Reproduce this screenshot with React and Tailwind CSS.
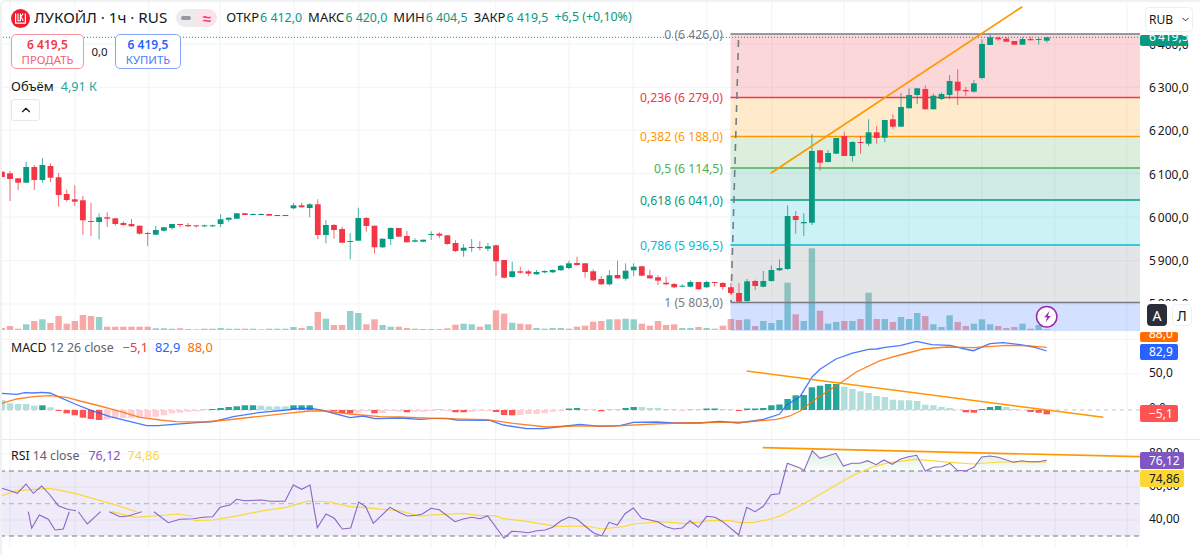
import React from 'react';
import { ChevronUp, ChevronDown } from 'lucide-react';

const UP = '#089981';
const DOWN = '#f23645';

// bar position on the time scale
const barX = (i) => 1.9 + 8.1 * i;

// [direction, body top, body bottom, high, low, volume height]
const candles = [
  ['d', 171.7, 177, 171, 177.7, 2], ['d', 173.3, 179, 171, 201, 4], ['d', 178.3, 182.7, 178.3, 190, 1.3], ['u', 167, 182.7, 162, 182.7, 5.7],
  ['d', 167, 180, 165, 190, 9], ['u', 165, 180, 158, 182.7, 10.7], ['d', 166, 177.7, 163.3, 182, 7], ['d', 177.3, 195, 173, 206.7, 14],
  ['d', 194, 200, 189.7, 201.7, 6.3], ['d', 199.3, 201.7, 185.3, 206, 9], ['d', 200.3, 220.3, 196, 234.7, 15], ['d', 221, 222, 202.7, 236, 14],
  ['u', 217.3, 222, 213.3, 239.3, 13], ['d', 217.3, 218.7, 212.3, 227, 3.3], ['d', 218.3, 224, 218.3, 225.7, 3.3], ['d', 223, 225, 221.3, 225.7, 3.3],
  ['d', 224, 226.3, 219, 226.7, 3.3], ['d', 225.7, 233.7, 225.7, 234.7, 3.3], ['d', 233, 234, 231.7, 246, 3.3], ['u', 230, 234.7, 225.7, 235, 1.7],
  ['u', 227.3, 230.7, 227.3, 231.7, 1.7], ['u', 224, 228, 224, 229.7, 1.3], ['d', 224, 225, 224, 227, 1.7], ['d', 225, 226.3, 223, 226.7, 1],
  ['d', 225.3, 226.3, 225.3, 227.7, 0.7], ['u', 225.3, 226.3, 224.7, 227.3, 1.3], ['u', 225.3, 226.3, 224.7, 227, 1.3], ['u', 219.3, 224, 214.3, 227, 2],
  ['u', 217.7, 219.7, 217.7, 221.7, 1.3], ['u', 213.3, 218.7, 213, 218.7, 1.3], ['d', 213.3, 215, 213, 215, 1.3], ['u', 214, 215, 213.3, 215, 1.3],
  ['u', 214, 215, 213.3, 215, 0.7], ['d', 214, 215.7, 213.7, 215.7, 1.3], ['u', 215, 215.7, 215, 215.7, 1.3], ['u', 215, 215.7, 215, 215.7, 1.3],
  ['u', 205.3, 208.3, 203, 209.3, 3], ['d', 205.3, 207.3, 203, 207.7, 2], ['u', 204.3, 208, 203.3, 217.3, 4], ['d', 204.3, 235, 199.3, 239.3, 18],
  ['u', 225, 235, 220, 243.3, 11.3], ['d', 225, 230, 224, 238.7, 5], ['d', 229, 242.7, 226.7, 243.3, 5], ['u', 241, 242, 233, 259.3, 19],
  ['u', 218, 240.7, 207.7, 241, 17], ['d', 218, 226, 217, 231.7, 5.7], ['d', 225.7, 247.3, 225.7, 253.3, 10.7], ['u', 238.7, 247.3, 238.7, 248, 5],
  ['u', 228, 239, 227.3, 245, 3.3], ['d', 228, 236.7, 228, 236.7, 3.3], ['d', 236, 242.3, 231, 242.3, 2], ['u', 240.3, 241.7, 238.3, 242.3, 1.3],
  ['u', 239.7, 241.7, 239.7, 242.3, 1], ['u', 234, 235, 231.3, 240, 1], ['d', 233.7, 235.7, 232.3, 238.3, 1], ['d', 235.3, 244, 235.3, 244.7, 1.7],
  ['d', 243, 251, 240.3, 252, 5.3], ['u', 247.7, 250.7, 244, 256.7, 6.3], ['u', 247, 248, 239, 252, 5.7], ['d', 247, 248, 241.3, 250.3, 3.3],
  ['u', 246.3, 248.7, 243, 251.3, 5.7], ['d', 245.3, 261.3, 244.7, 276, 19.7], ['d', 260, 277.7, 260, 278.3, 16.3], ['u', 271.3, 277, 261.7, 277.7, 7.3],
  ['d', 271.3, 272.7, 266.7, 273.7, 6.3], ['d', 271.3, 273.7, 269.7, 276, 5.7], ['u', 272, 274.3, 270, 274.7, 2], ['u', 271, 272.3, 270.3, 273.3, 1.3],
  ['u', 270, 272.3, 269.3, 273, 2], ['u', 265.7, 270.3, 265, 270.7, 2], ['u', 263.3, 268, 260.7, 269.3, 1.3], ['d', 263, 265, 256.7, 265.7, 3.3],
  ['d', 263.3, 272, 263.3, 277.7, 4.3], ['d', 271.3, 280.3, 269.3, 281, 8.3], ['d', 279, 284.3, 276, 285, 9], ['u', 275.3, 284.3, 270, 285.7, 10.7],
  ['d', 275, 278.3, 260.7, 279, 10.7], ['u', 270.7, 278.7, 263.3, 280.7, 11.3], ['u', 266.7, 270.3, 263.3, 276, 10.7], ['d', 266.3, 275.7, 265.7, 276.3, 6.3],
  ['d', 275.3, 278.3, 270, 279, 4.3], ['d', 277.3, 280.7, 275.3, 285, 9], ['d', 282.7, 284.3, 276.7, 285.3, 5], ['d', 284, 287.3, 283, 288, 5.7],
  ['u', 285.7, 286.7, 284.3, 287.3, 2], ['u', 282, 286.7, 280.3, 287.3, 2], ['d', 282, 289.3, 282, 289.7, 3], ['u', 282, 287.3, 280.7, 287.7, 2],
  ['d', 282, 282.7, 282, 286.7, 1.3], ['d', 283, 287, 282, 290, 4.3], ['d', 287.3, 293, 283, 295, 11], ['d', 293, 301.7, 283, 302, 10],
  ['u', 281.3, 301, 279, 302, 10.7], ['d', 281, 286, 279.7, 290, 4], ['u', 281, 286.7, 271, 287.3, 9], ['u', 270, 281, 265.7, 281.7, 7],
  ['u', 268, 270.3, 259.3, 271, 10], ['u', 216, 269, 205.3, 270, 47.3], ['d', 216, 220, 211, 233.7, 15.7], ['u', 222, 223.3, 213.3, 236, 9],
  ['u', 151, 222.7, 134, 225, 81.7], ['d', 150.3, 162.7, 150, 170.7, 19.3], ['u', 153, 162, 150, 162.3, 6.3], ['u', 138, 153.7, 138, 154, 8],
  ['d', 136, 156, 131.7, 156, 9], ['u', 142, 156, 141.3, 161.7, 9], ['d', 142, 143, 136, 153.7, 11], ['u', 132.3, 143.7, 119.3, 146, 37.3],
  ['d', 132.3, 138, 126, 143.7, 11], ['u', 120, 137.7, 119.7, 142.3, 11], ['d', 119.3, 126.7, 114.3, 128.7, 8], ['u', 107, 126.7, 93, 126.7, 13],
  ['u', 95, 108.3, 88.3, 108.3, 11], ['u', 88.3, 95, 88.3, 104, 17], ['d', 89, 109.3, 85.3, 109.3, 14], ['u', 95.7, 109.3, 93.7, 109.3, 5.7],
  ['u', 94, 99, 92.3, 100, 3], ['u', 81, 95, 75, 99.3, 14.7], ['d', 81.7, 90.7, 69.3, 105, 8], ['d', 90, 91.3, 87, 95.7, 4],
  ['u', 83.3, 91.7, 80, 92.7, 6.3], ['u', 44, 78, 39.3, 79.3, 10.7], ['u', 37.3, 45, 35, 45, 5.7], ['d', 37.7, 39.3, 36.7, 40.7, 4],
  ['d', 38.7, 41.7, 37, 41.7, 2], ['d', 41, 44.7, 41, 44.7, 3], ['u', 39, 44.7, 37.3, 44.7, 6.3], ['d', 39, 40.3, 36.7, 40.3, 1.3],
  ['u', 39, 39.7, 37.3, 44.7, 5], ['u', 37.3, 40.7, 37.3, 42.7, 0.7],
];

const histogram = [
  10, 6.7, 6, 6, 4.3, 4.7, 2.7, -1, -3.3, -5.3, -7.7, -9, -10, -9.3, -7.7, -8, -8, -8, -7.3, -6.7, -5.3, -3.3, -2.7, -1.7, -1.3,
  1, 1, 2, 3, 3.7, 4.7, 4.7, 4.3, 3.7, 3.7, 3.7, 4.7, 4.7, 4.7, 0.7, -1, -1.3, -3, -3.3, -2.7, -1.3, -3.3, -3, -1, -1.7,
  -2.3, -1.7, -1.7, -1, 1, -1, -2.3, -2.3, -1.7, -1, -1, -2, -5, -5.3, -5, -4, -4, -3.3, -1.7, -1,
  1.5, 2, 1, 0.7, -1.3, 1, 1, 2, 3, 3, 2, 2, 1, 0.7, -1, 1, 0.7, 1.5, 1.5, 1, 0.7, -1, 1.5, 1.5, 2, 4.7, 5.5, 11, 14.7,
  15, 22.7, 24.3, 26, 26, 23.3, 21, 18.7, 17, 14, 13, 10.3, 9.7, 9.7, 9, 5.3, 4.7, 3, 2, 0.3, -2.3, -2.7, 1, 3, 4, 3, 1, -0.5, -2, -2.7, -4.3,
];

const strongBars = new Set([
  5, 7, 8, 9, 10, 11, 12, 26, 27, 28, 29, 30, 31, 36, 37, 38, 41, 42, 43, 46, 50, 56, 57, 61, 62, 63, 70, 71, 74, 77, 78, 87, 88, 91,
  92, 93, 94, 95, 96, 97, 98, 99, 100, 101, 102, 103, 119, 120, 121, 122, 123, 127, 128, 129,
]);

const histColor = (v, i) => {
  if (v >= 0) return strongBars.has(i) ? '#26a69a' : '#b2dfdb';
  return strongBars.has(i) ? '#ff5252' : '#ffcdd2';
};

const gridX = [10, 75, 148.7, 220, 294, 358.7, 431, 495.7, 569, 633, 706.7, 771.7, 844, 908.7, 982, 1055, 1127];

const fibZones = [
  { top: 34, bottom: 97.5, color: '#f23645' },
  { top: 97.5, bottom: 136.5, color: '#ff9800' },
  { top: 136.5, bottom: 168, color: '#4caf50' },
  { top: 168, bottom: 200, color: '#089981' },
  { top: 200, bottom: 245, color: '#00bcd4' },
  { top: 245, bottom: 302.5, color: '#787b86' },
  { top: 302.5, bottom: 331, color: '#2962ff' },
];

const fibLevels = [
  { y: 34, label: '0 (6 426,0)', color: '#787b86' },
  { y: 97.5, label: '0,236 (6 279,0)', color: '#f23645' },
  { y: 136.5, label: '0,382 (6 188,0)', color: '#ff9800' },
  { y: 168, label: '0,5 (6 114,5)', color: '#4caf50' },
  { y: 200, label: '0,618 (6 041,0)', color: '#089981' },
  { y: 245, label: '0,786 (5 936,5)', color: '#00bcd4' },
  { y: 302.5, label: '1 (5 803,0)', color: '#787b86' },
];

const macdLine = '1.7,393.3 16.7,394.3 25,392.7 33.3,393 41.7,392.3 50,393 58.3,396.7 75,404 91.7,410.7 110,416.7 146.7,425.7 158.3,425.7 173.3,424.3 196.7,422.7 213.3,421.7 233.3,416.7 258.3,412.7 286.7,410 295,408.7 311.7,408.3 325,411 350,417.7 363.3,416 375,418.7 400,418 420,419.3 433.3,418.3 446.7,418.3 456.7,420 490,420.3 503.3,425 526.7,428.7 543.3,428.7 566.7,426 580,424.3 600,426.3 620,425.7 633.3,422.3 656.7,422 673.3,423 700,423 720,421.3 738.3,423 763.3,419.3 779.3,414.3 786.7,405 800,396.7 812.3,376.7 820,369.3 836,359 851.7,353.3 868.3,349.3 876.7,349 885,347.3 900,345.7 916.7,341.3 931.7,344.7 950,345.3 965,349 973.3,350.7 990,343.7 1003.3,342.7 1020,344.7 1033.3,347 1046.7,351';
const signalLine = '1.7,403.3 16.7,399 33.3,396.7 50,395.7 66.7,397.3 80,401 100,406 120,411.3 140,417.3 160,420 176.7,421.7 203.3,422 226.7,420 260,416.3 286.7,413.3 310,411 325,411 350,414 380,416.7 400,417 433.3,418.3 486.7,419.7 513.3,423.3 546.7,427 573.3,426 613.3,426 646.7,424.3 680,423 720,422.3 746.7,422 776.7,419.3 790,416 800,411 816.7,398.3 840,383.3 856.7,371.7 880,360.7 900,355 923.3,349 946.7,347 973.3,347.7 1006.7,345.3 1026.7,345.7 1046.7,347.3';

const rsiHead = [
  '1.7,488.3 13.3,491.7 17.3,493.3 26,484 33.3,493.3 41.7,486 50,495 58.3,505.7 66.7,509 76,510.7',
  '28.3,511.7 31.7,528.3 39.3,515 48.3,519.3 55,530 63.3,529 69.3,511.7',
  '78.3,511.7 87.3,524 100.7,511.7',
  '109.3,511.7 120,516.7 128.3,516 141.7,511.7',
];
const rsiLong = '154,511.7 168.3,522.7 180,519.3 193.3,518.7 203.3,517.3 212.7,516.7 220,507.3 230,505 236.7,499.3 245,500.7 261.7,500 270,501.3 285,501.3 293.3,485 301.7,489.3 310,485 317.3,527.7 326,514 334.3,518.3 342.3,529 350.7,528 358.7,502 365.7,506.7 373.3,523.3 390,507.3 400,512.7 407.3,516 416.7,515.3 422.3,514 431,508.3 439.3,509.7 455,521.7 463.3,519 471.7,517.3 480,518.7 487.7,516 504,538.3 511.7,531.3 520,531.7 528.3,532.7 536.7,530.7 545,530 552.7,527.3 560.7,521 569,517 576.7,519 585,526 593.3,532.7 601.7,536 609,522.3 617.3,525 625,513.7 633.3,508 641.7,518.3 650,520 657.7,521.7 666,526.7 674,529 682.3,528 690,520.7 698.3,527.3 706.7,516.3 715,517.3 722.7,521.7 738.7,535 746.7,507.3 755,511.7 763.3,506.3 771,494.7 779.3,493.7 787.3,463.3 800,468 804,470.7 812.3,450.7 820,458.3 836,453.3 843.3,466 851.7,463.3 860,463.3 867.7,460.7 876,464.7 884,460 892.3,464.3 900,459.3 908.3,456.7 916.7,455.3 925.3,471 933.3,467.3 941.7,466.7 950,463.3 957.3,470.3 965.7,471 974,467.3 981.7,457 990,456 998.3,457.3 1013.3,462.3 1021.7,460.7 1030,461.7 1038.3,461.7 1046.7,460.3';
const rsiFill = '787.3,463.3 800,468 804,470.7 812.3,450.7 820,458.3 836,453.3 843.3,466 851.7,463.3 860,463.3 867.7,460.7 876,464.7 884,460 892.3,464.3 900,459.3 908.3,456.7 916.7,455.3 925.3,471 933.3,467.3 941.7,466.7 950,463.3 957.3,470.3 965.7,471 974,467.3 981.7,457 990,456 998.3,457.3 1013.3,462.3 1021.7,460.7 1030,461.7 1038.3,461.7 1046.7,460.3 1046.7,471 782,471';
const rsiMa = [
  '1.7,495.7 16.7,490.7 50,488.3 75,493.3 110,503.3 136.7,511.7',
  '111.7,511.7 135,517.3 166.7,515 176.7,514 192.7,516',
  '193.3,520.7 213.3,520 233.3,516.7 263.3,510.7 285,507.7 308.3,501 330,502 350,506.7 373.3,508.3 400,511 421.7,516.3 430,515 463.3,513.3 480,515.7 495,515.7 503.3,518.7 526.7,521.3 556.7,526.3 586.7,526 601.7,529 623.3,526.7 633.3,524 660,521.7 686.7,523.7 710,520.7 730,520.7 740,522.7 753.3,522.3 766.7,520 780,516 800,505.7 813.3,498.3 833.3,486.7 853.3,475 873.3,466.7 890,462.3 916.7,459.3 950,462.3 973.3,464 1000,462 1046.7,462',
];

// axis numbers use a thin space as thousands separator
const priceLabels = ['6\u2009400,0', '6\u2009300,0', '6\u2009200,0', '6\u2009100,0', '6\u2009000,0', '5\u2009900,0', '5\u2009800,0'];

const GridV = ({ top, bottom }) =>
  gridX.map((x) => <line key={x} x1={x} x2={x} y1={top} y2={bottom} stroke="#f2f3f5" />);

const GridH = ({ ys }) =>
  ys.map((y) => <line key={y} x1={0} x2={1140} y1={y} y2={y} stroke="#f2f3f5" />);

const LukoilLogo = () => (
  <svg width="19" height="19" viewBox="0 0 19 19" className="shrink-0">
    <circle cx="9.5" cy="9.5" r="9.5" fill="#ed1c2e" />
    <path d="M4.6 4.5v9.7h9.8V4.5" fill="none" stroke="#fff" strokeWidth="1.2" />
    <path d="M7 4.5v7.2h2.4V4.5M9.4 8.2l2.8-3.7M9.8 7.8l2.6 3.9" fill="none" stroke="#fff" strokeWidth="1.1" />
  </svg>
);

const MainPane = () => (
  <svg width="1140" height="332" viewBox="0 0 1140 332" className="block">
    <GridV top={0} bottom={332} />
    <GridH ys={[44, 87.3, 130, 173.3, 217, 260.7, 304]} />
    {candles.map((c, i) => (
      <rect key={i} x={barX(i) - 3.2} y={330 - c[5]} width="6.4" height={c[5]} fill={c[0] === 'u' ? '#26a69a' : '#ef5350'} fillOpacity="0.5" />
    ))}
    {fibZones.map((z) => (
      <rect key={z.top} x="730.5" y={z.top} width="409.5" height={z.bottom - z.top} fill={z.color} fillOpacity="0.2" />
    ))}
    {fibLevels.map((l) => (
      <g key={l.y}>
        <line x1="730.5" x2="1140" y1={l.y} y2={l.y} stroke={l.color} strokeWidth="1.5" />
        <text x="723" y={l.y + 4.5} textAnchor="end" fontSize="12.2" fill={l.color}>{l.label}</text>
      </g>
    ))}
    <line x1="738.5" y1="40" x2="731" y2="302" stroke="#787b86" strokeWidth="1.6" strokeDasharray="7 6" />
    {candles.map((c, i) => {
      const x = barX(i);
      const color = c[0] === 'u' ? UP : DOWN;
      return (
        <g key={i}>
          <line x1={x} x2={x} y1={c[3]} y2={c[4]} stroke={color} strokeOpacity="0.75" />
          <rect x={x - 2.9} y={c[1]} width="5.8" height={Math.max(c[2] - c[1], 1)} fill={color} />
        </g>
      );
    })}
    <line x1="0" x2="1140" y1="37.3" y2="37.3" stroke={UP} strokeDasharray="1 2" />
    <line x1="770.7" y1="173.3" x2="1022.3" y2="6.7" stroke="#ff9800" strokeWidth="1.7" />
    <circle cx="1046.7" cy="316.7" r="10.2" fill="#fff" stroke="#9c27b0" strokeWidth="1.5" />
    <path d="M1049.5 311l-5.3 6.3h3l-1.7 5 5.3-6.4h-3z" fill="#9c27b0" />
  </svg>
);

const MacdPane = () => (
  <svg width="1140" height="107" viewBox="0 332 1140 107" className="block">
    <GridV top={332} bottom={439} />
    <GridH ys={[339.3, 374]} />
    <line x1="0" x2="1140" y1="410" y2="410" stroke="#c3c5cc" strokeDasharray="4 4" />
    {histogram.map((v, i) => (
      <rect key={i} x={barX(i) - 3.2} y={v >= 0 ? 410 - v : 410} width="6.4" height={Math.abs(v)} fill={histColor(v, i)} />
    ))}
    <polyline points={macdLine} fill="none" stroke="#2962ff" strokeOpacity="0.85" strokeWidth="1.3" />
    <polyline points={signalLine} fill="none" stroke="#ff6d00" strokeOpacity="0.85" strokeWidth="1.3" />
    <line x1="746.7" y1="371" x2="1103.3" y2="417.3" stroke="#ff9800" strokeWidth="1.6" />
  </svg>
);

const RsiPane = () => (
  <svg width="1140" height="115" viewBox="0 440 1140 115" className="block">
    <defs>
      <linearGradient id="rsiOver" x1="0" x2="0" y1="450" y2="471" gradientUnits="userSpaceOnUse">
        <stop offset="0" stopColor="#4caf50" stopOpacity="0.22" />
        <stop offset="1" stopColor="#4caf50" stopOpacity="0.02" />
      </linearGradient>
    </defs>
    <GridV top={440} bottom={548} />
    <GridH ys={[454, 487, 520]} />
    <rect x="0" y="471" width="1140" height="65" fill="#7e57c2" fillOpacity="0.12" />
    <line x1="0" x2="1140" y1="471" y2="471" stroke="#787b86" strokeDasharray="5 4" />
    <line x1="0" x2="1140" y1="503.7" y2="503.7" stroke="#787b86" strokeOpacity="0.5" strokeDasharray="5 4" />
    <line x1="0" x2="1140" y1="536" y2="536" stroke="#787b86" strokeDasharray="5 4" />
    <polygon points={rsiFill} fill="url(#rsiOver)" />
    {rsiMa.map((p) => (
      <polyline key={p} points={p} fill="none" stroke="#fdd835" strokeWidth="1.2" />
    ))}
    {rsiHead.map((p) => (
      <polyline key={p} points={p} fill="none" stroke="#7e57c2" strokeOpacity="0.9" strokeWidth="1.1" />
    ))}
    <polyline points={rsiLong} fill="none" stroke="#7e57c2" strokeOpacity="0.9" strokeWidth="1.1" />
    <line x1="762.7" y1="447.7" x2="1140" y2="456.7" stroke="#ff9800" strokeWidth="1.7" />
  </svg>
);

const AxisTag = ({ className, children }) => (
  <div className={`absolute left-0 flex overflow-hidden rounded-[2px] pl-[9px] text-[12px] ${className}`}>
    {children}
  </div>
);

export default function App() {
  return (
    <div className="relative flex h-[555px] w-[1200px] flex-col overflow-hidden bg-white font-['Noto_Sans','Liberation_Sans',sans-serif] text-[#131722]">
      <div className="flex h-[332px]">
        <div className="relative w-[1140px]">
          <MainPane />
          <div className="absolute left-0 top-0 flex flex-col items-start pl-[11px] pt-[8px]">
            <div className="flex h-[20px] items-center">
              <LukoilLogo />
              <span className="ml-[4px] text-[15.2px] leading-none whitespace-nowrap">ЛУКОЙЛ · 1ч · RUS</span>
              <div className="ml-[9px] flex h-[18px] w-[41px] overflow-hidden rounded-full">
                <div className="flex w-[20px] items-center justify-center bg-[#ececee]">
                  <span className="h-[4px] w-[10px] rounded-full bg-[#9598a1]" />
                </div>
                <div className="flex flex-1 items-center justify-center bg-[#fce3e8] text-[15px] font-semibold leading-[18px] text-[#f23d7a]">≈</div>
              </div>
              <div className="ml-[9px] flex gap-[6px] text-[13px] whitespace-nowrap">
                <span>ОТКР<span className="ml-[1px] text-[12.4px] text-[#089981]">6 412,0</span></span>
                <span>МАКС<span className="ml-[1px] text-[12.4px] text-[#089981]">6 420,0</span></span>
                <span>МИН<span className="ml-[1px] text-[12.4px] text-[#089981]">6 404,5</span></span>
                <span>ЗАКР<span className="ml-[1px] text-[12.4px] text-[#089981]">6 419,5</span></span>
                <span className="text-[12.4px] text-[#089981]">+6,5 (+0,10%)</span>
              </div>
            </div>
            <div className="mt-[6px] flex items-center">
              <div className="flex h-[35px] w-[73px] flex-col items-center justify-center rounded-[5px] border border-[#f7949d] bg-white leading-[15px] text-[#f23645]">
                <span className="text-[12px] font-semibold">6 419,5</span>
                <span className="text-[11.4px] text-[#f5606c]">ПРОДАТЬ</span>
              </div>
              <span className="w-[31px] text-center text-[11.5px]">0,0</span>
              <div className="flex h-[35px] w-[66px] flex-col items-center justify-center rounded-[5px] border border-[#84a5fb] bg-white leading-[15px] text-[#2962ff]">
                <span className="text-[12px] font-semibold">6 419,5</span>
                <span className="text-[11.4px] text-[#4b7bfb]">КУПИТЬ</span>
              </div>
            </div>
            <div className="mt-[9px] flex h-[18px] items-center gap-[7px] text-[13px]">
              <span>Объём</span>
              <span className="text-[12.6px] text-[#26a69a]">4,91 К</span>
            </div>
            <div className="mt-[3px] flex h-[22px] w-[29px] items-center justify-center rounded-[3px] border border-[#e6e7eb] bg-white">
              <ChevronUp size={14} strokeWidth={2} />
            </div>
          </div>
        </div>
        <div className="relative w-[60px] text-[12px]">
          <div className="flex flex-col pl-[9px] pt-[23px]">
            {priceLabels.map((p) => (
              <div key={p} className="flex h-[43.3px] items-center whitespace-nowrap">{p}</div>
            ))}
          </div>
          <div className="absolute left-[5px] top-[7px] flex h-[25px] w-[48px] items-center justify-between rounded-[4px] border border-[#eeeff2] bg-white pl-[3px] pr-[1px] text-[12px]">
            RUB
            <ChevronDown size={11} strokeWidth={2} />
          </div>
          <AxisTag className="top-[35px] h-[11px] w-[48px] items-start bg-[#089981] text-white">
            <span className="mt-[-5px] leading-[14px] whitespace-nowrap">6{'\u2009'}419,5</span>
          </AxisTag>
          <div className="absolute left-0 top-[301px] flex h-[31px] w-[60px] gap-[5px] bg-white pl-[7px] pt-[3px]">
            <div className="flex h-[22px] w-[20px] items-center justify-center rounded-[4px] bg-[#2a2e39] text-[14px] text-white">A</div>
            <div className="flex h-[22px] w-[20px] items-center justify-center rounded-[4px] border border-[#eeeff2] text-[14px]">Л</div>
          </div>
        </div>
      </div>

      <div className="flex h-[108px] border-b border-[#e9eaed]">
        <div className="relative w-[1140px]">
          <MacdPane />
          <div className="absolute left-[11px] top-[6px] flex items-baseline gap-[7px] text-[12.8px] whitespace-nowrap">
            <span className="text-[12.3px]">MACD <span className="text-[#5d606b]">12 26 close</span></span>
            <span className="ml-[2px] text-[#f23645]">−5,1</span>
            <span className="text-[#2962ff]">82,9</span>
            <span className="text-[#ff6d00]">88,0</span>
          </div>
        </div>
        <div className="relative w-[60px] text-[12px]">
          <div className="pl-[9px] pt-[33px] leading-[16px]">50,0</div>
          <div className="mt-[19px] pl-[9px] leading-[16px]">0,0</div>
          <AxisTag className="top-0 h-[10px] w-[38px] items-start bg-[#ff6d00] text-white">
            <span className="mt-[-5px] leading-[14px]">88,0</span>
          </AxisTag>
          <AxisTag className="top-[12px] h-[16px] w-[38px] items-center bg-[#2962ff] text-white">82,9</AxisTag>
          <AxisTag className="top-[73px] h-[17px] w-[38px] items-center bg-[#ff5252] text-white">−5,1</AxisTag>
        </div>
      </div>

      <div className="flex flex-1">
        <div className="relative w-[1140px]">
          <RsiPane />
          <div className="absolute left-[11px] top-[7px] flex items-baseline gap-[7px] text-[12.6px] whitespace-nowrap">
            <span className="text-[12.3px]">RSI <span className="text-[#5d606b]">14 close</span></span>
            <span className="ml-[2px] text-[#7e57c2]">76,12</span>
            <span className="text-[#fdd835]">74,86</span>
          </div>
        </div>
        <div className="relative w-[60px] text-[12px]">
          <div className="mt-[-4px] flex flex-col pl-[9px]">
            {['80,00', '60,00', '40,00'].map((v) => (
              <div key={v} className="flex h-[33.2px] items-center">{v}</div>
            ))}
          </div>
          <AxisTag className="top-[12px] h-[17px] w-[44px] items-center bg-[#7e57c2] text-white">76,12</AxisTag>
          <AxisTag className="top-[30px] h-[17px] w-[44px] items-center bg-[#fdd835] text-[#131722]">74,86</AxisTag>
        </div>
      </div>

      <div className="pointer-events-none absolute inset-0 rounded-tl-md border-l-2 border-t-2 border-[#f0f1f3]" />
    </div>
  );
}
